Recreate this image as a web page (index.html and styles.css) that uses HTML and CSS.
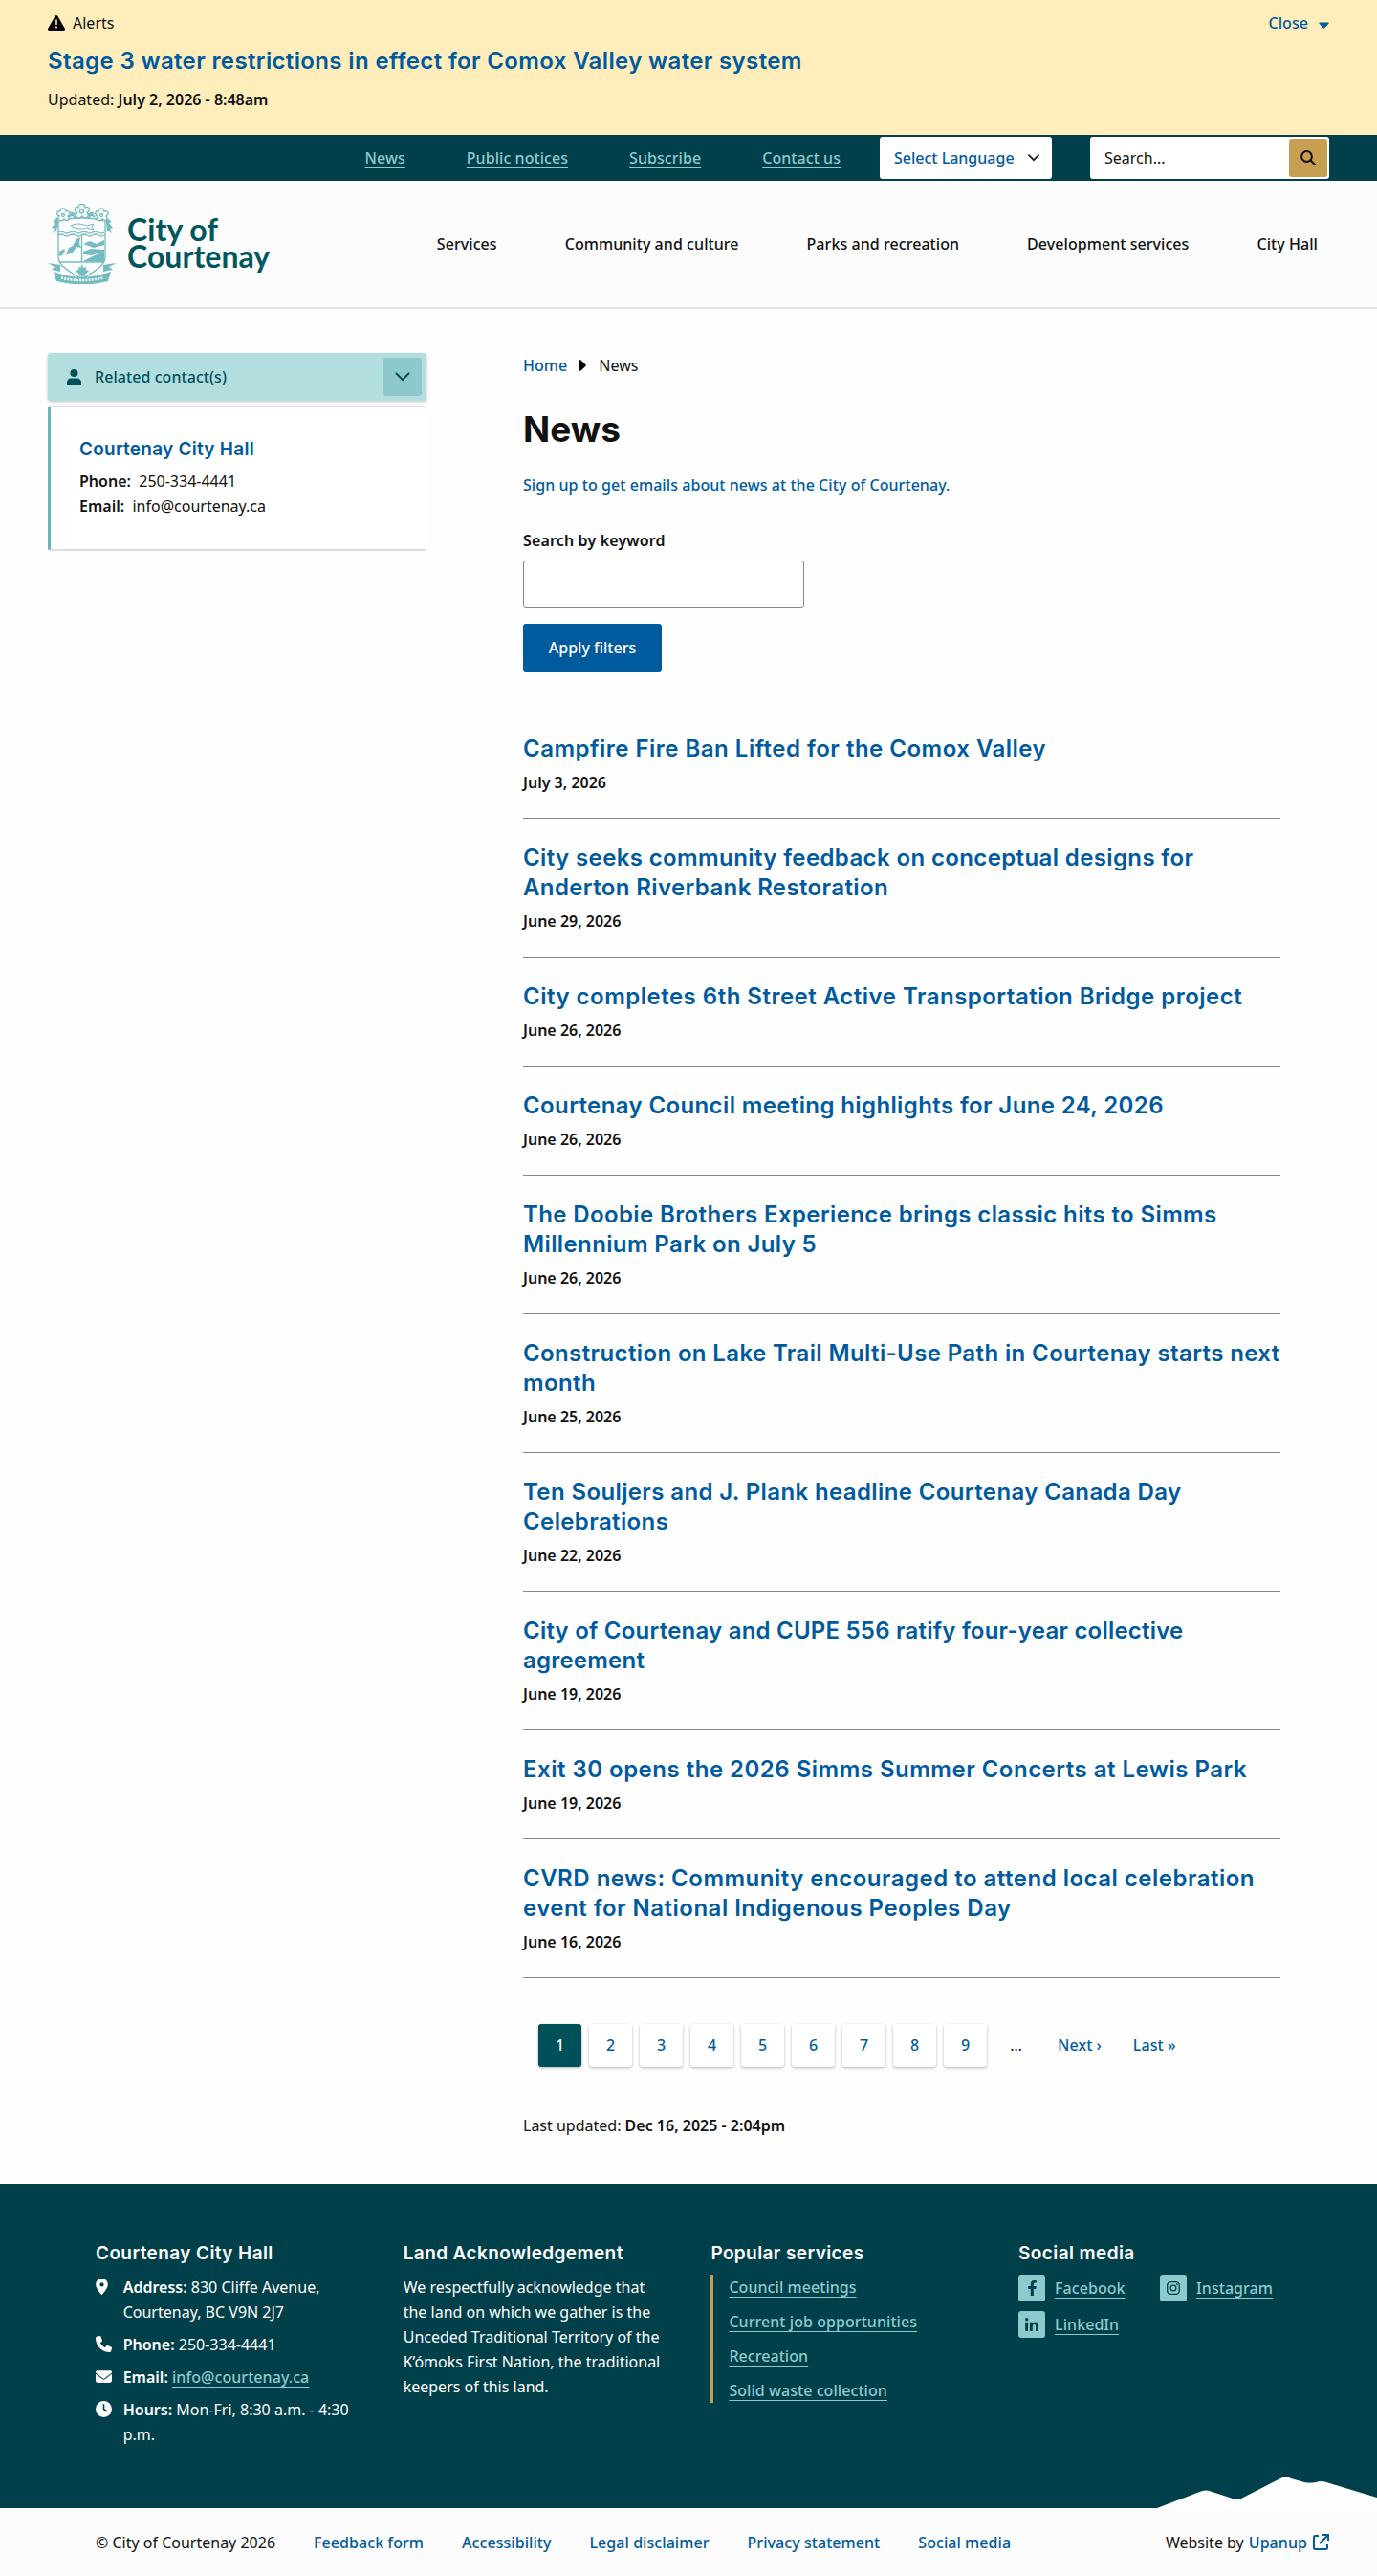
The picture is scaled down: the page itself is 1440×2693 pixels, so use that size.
FILE: index.html
```html
<!DOCTYPE html>
<html lang="en">
<head>
  <meta charset="UTF-8">
  <title>News | City of Courtenay</title>
  <link rel="stylesheet" href="styles.css">
</head>
<body>

<section class="alerts">
  <div class="alerts-top">
    <div class="alerts-label">
      <svg class="icon-warning" viewBox="0 0 18 16"><path d="M9 0c.6 0 1 .3 1.300.8l7.500 13c.6 1-.1 2.200-1.300 2.200h-15C.3 16-.4 14.800.2 13.800l7.500-13C8 .3 8.400 0 9 0z"/><path d="M9 5v4.500" stroke="#ffeebb" stroke-width="1.600" stroke-linecap="round"/><circle cx="9" cy="12.500" r="1.100" fill="#ffeebb"/></svg>
      Alerts
    </div>
    <a class="alerts-close" href="#">Close
      <svg width="11" height="7" viewBox="0 0 11 7"><path d="M1 .5h9c.7 0 1 .7.5 1.200L6.200 6.300a1 1 0 0 1-1.400 0L.5 1.700C0 1.200.3.500 1 .5z"/></svg>
    </a>
  </div>
  <h2 class="alerts-title"><a href="#">Stage 3 water restrictions in effect for Comox Valley water system</a></h2>
  <p class="alerts-date">Updated: <strong>July 2, 2026 - 8:48am</strong></p>
</section>

<div class="topbar">
  <nav class="topbar-links">
    <a href="#">News</a>
    <a href="#">Public notices</a>
    <a href="#">Subscribe</a>
    <a href="#">Contact us</a>
  </nav>
  <div class="language">
    Select Language
    <svg width="12" height="8" viewBox="0 0 12 8"><path d="M1 1.200l5 5 5-5" fill="none" stroke="#222" stroke-width="1.800" stroke-linecap="round"/></svg>
  </div>
  <form class="search">
    <span class="search-text">Search...</span>
    <button class="search-button" type="button">
      <svg width="16" height="16" viewBox="0 0 16 16"><circle cx="6.500" cy="6.500" r="5.400" fill="none" stroke="#111" stroke-width="2"/><path d="M10.500 10.500l4.500 4.500" stroke="#111" stroke-width="2" stroke-linecap="round"/></svg>
    </button>
  </form>
</div>

<header class="header">
  <a class="logo" href="#">
    <svg class="crest" viewBox="0 0 72 84" fill="none" stroke="#74bcc0" stroke-width="1.300">
      <!-- shield -->
      <path d="M11 18c14-4 35-4 49 0v38c0 9-12 15-24.500 23C23 71 11 65 11 56z" fill="#fcfcfc"/>
      <path d="M11 30q3-2 6 0t6 0 6 0 6 0 6 0 6 0 6 0 6 0M11 33q3-2 6 0t6 0 6 0 6 0 6 0 6 0 6 0 6 0"/>
      <path d="M35.500 33v28M12 61h47"/>
      <path d="M24 23q7-4 17 0l7-2-2 3 2 3-7-2q-9 3-17-2z" stroke-width="1"/>
      <g fill="#74bcc0" stroke="none">
        <path d="M12 50l5-3 1 2-3 5-3 1zM19 54l3-8 4-2 4-7 4-2-1 7 2 4-5-1-4 6-3 1z"/>
        <path d="M37 42l7-3 7 3 8-4v5l-11 3zM37 50l8-3 14 1v2L46 54l-9-1zM37 60l10-5 12-5v11z"/>
        <path d="M35.500 63l2 4 3-1-1 3 4 1-5 4 1 2-3-.5v3h-1v-3l-3 .5 1-2-5-4 4-1-1-3 3 1z"/>
        <path d="M0 62l13 2v7l-9-2 3-3zM72 62l-14 2v7l10-2-4-3z"/>
        <path d="M6 71q29 11 60 0l-3 10q-27 7-54 0z"/>
        <path d="M10 14l-5 5 3 1-4 5 3 1-2 5 4-3 2-8zM61 14l6 5-3 1 4 5-3 1 2 5-5-3-1-8z"/>
      </g>
      <!-- flowers -->
      <g fill="#fcfcfc">
        <path d="M31 9c-5-2-2-7 1-5 0-5 7-5 7 0 4-2 7 3 2 5 4 4-2 8-5 4-4 4-9 0-5-4z"/><circle cx="35.500" cy="8" r="2"/>
        <path d="M12 13c-4-2-2-6 1-5 0-4 6-4 6 0 4-1 6 3 2 5 3 4-1 6-4 3-4 4-8 0-5-3zM52 13c-4-2-2-6 1-5 0-4 6-4 6 0 4-1 6 3 2 5 3 4-1 6-4 3-4 4-8 0-5-3z"/>
        <circle cx="16" cy="12" r="1.500"/><circle cx="56" cy="12" r="1.500"/>
      </g>
      <path d="M22 14q4-5 7 2M49 14q-4-5-7 2M23 10q4-1 6 2M48 10q-4-1-6 2" stroke-width="2"/>
      <path d="M14 77.500q22 5 44 0" stroke="#fcfcfc" stroke-width="2.500" stroke-dasharray="2 1.200"/>
    </svg>
    <span class="logo-text">City of<br>Courtenay</span>
  </a>
  <nav class="main-nav">
    <a href="#">Services</a>
    <a href="#">Community and culture</a>
    <a href="#">Parks and recreation</a>
    <a href="#">Development services</a>
    <a href="#">City Hall</a>
  </nav>
</header>

<div class="page">
  <aside class="sidebar">
    <div class="contact-toggle">
      <svg width="15" height="17" viewBox="0 0 15 17"><circle cx="7.500" cy="4" r="4"/><path d="M0 17v-3c0-3 2-4.500 4-4.500h7c2 0 4 1.500 4 4.500v3z"/></svg>
      <span>Related contact(s)</span>
      <button class="toggle-button" type="button">
        <svg width="16" height="10" viewBox="0 0 16 10"><path d="M1.500 1.500L8 8l6.500-6.500" fill="none" stroke="#00505a" stroke-width="2" stroke-linecap="round"/></svg>
      </button>
    </div>
    <div class="contact-card">
      <h3><a href="#">Courtenay City Hall</a></h3>
      <p><strong>Phone:</strong>&nbsp; 250-334-4441</p>
      <p><strong>Email:</strong>&nbsp; info@courtenay.ca</p>
    </div>
  </aside>

  <main class="content">
    <div class="breadcrumb">
      <a href="#">Home</a>
      <svg width="7" height="12" viewBox="0 0 7 12"><path d="M0 1C0 .1.900-.2 1.500.4l5 4.900c.4.400.4 1 0 1.400l-5 4.900C.9 12.200 0 11.900 0 11z"/></svg>
      <span>News</span>
    </div>
    <h1>News</h1>
    <p class="signup"><a href="#">Sign up to get emails about news at the City of Courtenay.</a></p>

    <form class="filters">
      <label for="keyword">Search by keyword</label>
      <input id="keyword" type="text">
      <button class="apply" type="button">Apply filters</button>
    </form>

    <div class="news-list">
      <article><h2 class="loose"><a href="#">Campfire Fire Ban Lifted for the Comox Valley</a></h2><time>July 3, 2026</time></article>
      <article><h2><a href="#">City seeks community feedback on conceptual designs for<br>Anderton Riverbank Restoration</a></h2><time>June 29, 2026</time></article>
      <article><h2 class="loose"><a href="#">City completes 6th Street Active Transportation Bridge project</a></h2><time>June 26, 2026</time></article>
      <article><h2><a href="#">Courtenay Council meeting highlights for June 24, 2026</a></h2><time>June 26, 2026</time></article>
      <article><h2><a href="#">The Doobie Brothers Experience brings classic hits to Simms<br>Millennium Park on July 5</a></h2><time>June 26, 2026</time></article>
      <article><h2><a href="#">Construction on Lake Trail Multi-Use Path in Courtenay starts next<br>month</a></h2><time>June 25, 2026</time></article>
      <article><h2><a href="#">Ten Souljers and J. Plank headline Courtenay Canada Day<br>Celebrations</a></h2><time>June 22, 2026</time></article>
      <article><h2 class="tight"><a href="#">City of Courtenay and CUPE 556 ratify four-year collective<br>agreement</a></h2><time>June 19, 2026</time></article>
      <article><h2 class="loose"><a href="#">Exit 30 opens the 2026 Simms Summer Concerts at Lewis Park</a></h2><time>June 19, 2026</time></article>
      <article><h2 class="loose"><a href="#">CVRD news: Community encouraged to attend local celebration<br>event for National Indigenous Peoples Day</a></h2><time>June 16, 2026</time></article>
    </div>

    <nav class="pager">
      <a class="active" href="#">1</a>
      <a href="#">2</a>
      <a href="#">3</a>
      <a href="#">4</a>
      <a href="#">5</a>
      <a href="#">6</a>
      <a href="#">7</a>
      <a href="#">8</a>
      <a href="#">9</a>
      <span class="dots">…</span>
      <a class="plain next" href="#">Next ›</a>
      <a class="plain" href="#">Last »</a>
    </nav>

    <p class="updated">Last updated: <strong>Dec 16, 2025 - 2:04pm</strong></p>
  </main>
</div>

<footer class="footer">
  <div class="footer-col">
    <h3>Courtenay City Hall</h3>
    <ul class="contact-list">
      <li>
        <svg width="13" height="17" viewBox="0 0 12 16"><path fill-rule="evenodd" d="M6 0a6 6 0 0 1 6 6c0 2.700-3.700 7.500-5.300 9.600a.9.900 0 0 1-1.400 0C3.700 13.500 0 8.700 0 6a6 6 0 0 1 6-6zm0 4a2 2 0 1 0 0 4 2 2 0 0 0 0-4z"/></svg>
        <p><strong>Address:</strong> 830 Cliffe Avenue, Courtenay, BC V9N 2J7</p>
      </li>
      <li>
        <svg width="17" height="17" viewBox="0 0 16 16"><path d="M5.200.8a1.300 1.300 0 0 0-1.500-.8L1 .8C.4 1 0 1.500 0 2c0 7.700 6.300 14 14 14 .6 0 1-.4 1.200-1l.8-2.700a1.300 1.300 0 0 0-.8-1.500L12 9.400a1.300 1.300 0 0 0-1.500.4L9.200 11.500A10.600 10.600 0 0 1 4.500 6.800l1.700-1.300c.4-.4.6-1 .3-1.500z"/></svg>
        <p><strong>Phone:</strong> 250-334-4441</p>
      </li>
      <li>
        <svg class="icon-mail" width="17" height="13" viewBox="0 0 16 12"><path d="M1.500 0h13a1.500 1.500 0 0 1 .9 2.700l-6.800 5.100a1 1 0 0 1-1.200 0L.6 2.700A1.500 1.500 0 0 1 1.500 0zM0 3.500l6.800 5.100c.7.500 1.700.5 2.400 0L16 3.500V10a2 2 0 0 1-2 2H2a2 2 0 0 1-2-2z"/></svg>
        <p><strong>Email:</strong> <a href="#">info@courtenay.ca</a></p>
      </li>
      <li>
        <svg width="17" height="17" viewBox="0 0 16 16"><circle cx="8" cy="8" r="8"/><path d="M8 3.500V8l3 2" fill="none" stroke="#00404a" stroke-width="1.500" stroke-linecap="round"/></svg>
        <p><strong>Hours:</strong> Mon-Fri, 8:30 a.m. - 4:30 p.m.</p>
      </li>
    </ul>
  </div>
  <div class="footer-col land">
    <h3>Land Acknowledgement</h3>
    <p>We respectfully acknowledge that the land on which we gather is the Unceded Traditional Territory of the K’ómoks First Nation, the traditional keepers of this land.</p>
  </div>
  <div class="footer-col">
    <h3>Popular services</h3>
    <ul class="services">
      <li><a href="#">Council meetings</a></li>
      <li><a href="#">Current job opportunities</a></li>
      <li><a href="#">Recreation</a></li>
      <li><a href="#">Solid waste collection</a></li>
    </ul>
  </div>
  <div class="footer-col">
    <h3>Social media</h3>
    <ul class="social">
      <li>
        <span class="social-icon"><svg width="10" height="16" viewBox="0 0 10 16"><path d="M9.300 9l.4-2.900H6.900V4.200c0-.8.4-1.600 1.600-1.600h1.300V.2S8.700 0 7.600 0C5.300 0 3.800 1.400 3.800 3.900v2.200H1.200V9h2.600v7h3.100V9z"/></svg></span>
        <a href="#">Facebook</a>
      </li>
      <li>
        <span class="social-icon"><svg width="14" height="14" viewBox="0 0 14 14" fill="none" stroke="#00404a" stroke-width="1.300"><rect x=".7" y=".7" width="12.600" height="12.600" rx="3.600"/><circle cx="7" cy="7" r="2.900"/><circle cx="10.700" cy="3.300" r=".3"/></svg></span>
        <a href="#">Instagram</a>
      </li>
      <li>
        <span class="social-icon"><svg width="14" height="14" viewBox="0 0 14 14"><circle cx="1.700" cy="1.700" r="1.700"/><path d="M.2 4.700h2.900V14H.2zM4.900 4.700h2.800v1.200c.5-.8 1.400-1.500 2.800-1.500C13.400 4.400 14 6.300 14 8.800V14h-2.900V9.400c0-1.100 0-2.500-1.500-2.500S7.800 8.100 7.800 9.400V14H4.900z"/></svg></span>
        <a href="#">LinkedIn</a>
      </li>
    </ul>
  </div>
  <svg class="mountains" viewBox="0 0 230 32"><path d="M0 32L46 14.500q5-2 10 0l23 7.500q5 2 9 0L129 1q6-3 11 0l14 4q6 1 12 0 6-2 11 0l53 16v11z" fill="#fefefe"/></svg>
</footer>

<div class="bottom">
  <span>© City of Courtenay 2026</span>
  <nav class="bottom-links">
    <a href="#">Feedback form</a>
    <a href="#">Accessibility</a>
    <a href="#">Legal disclaimer</a>
    <a href="#">Privacy statement</a>
    <a href="#">Social media</a>
  </nav>
  <span class="credit">Website by <a href="#">Upanup</a>
    <svg width="17" height="17" viewBox="0 0 17 17" fill="none" stroke="#005a9e" stroke-width="2"><path d="M6 2H2.500A1.500 1.500 0 0 0 1 3.500v11A1.500 1.500 0 0 0 2.500 16h11a1.500 1.500 0 0 0 1.500-1.500V11M10 1h6v6M16 1L7 10"/></svg>
  </span>
</div>

</body>
</html>
```
FILE: styles.css
```css
* { box-sizing: border-box; }
body { margin: 0; background: #fefefe; color: #111; font-family: "Noto Sans", sans-serif; font-size: 16px; line-height: 26px; }
h1, h2, h3, p, ul { margin: 0; padding: 0; }
h1, h2, h3 { font-family: Inter, sans-serif; font-weight: 600; }
ul { list-style: none; }
a { color: #005a9e; text-decoration: none; font-weight: 500; letter-spacing: .06px; }
h2 a, h3 a { font-weight: 600; letter-spacing: inherit; }
strong { font-weight: 600; }
svg { flex: none; }
button { border: none; padding: 0; font: inherit; }

/* alerts */
.alerts { height: 141px; background: #ffeebb; padding: 11px 50px 0; }
.alerts-top { display: flex; justify-content: space-between; }
.alerts-label { display: flex; align-items: center; gap: 8px; }
.icon-warning { width: 18px; height: 16px; }
.alerts-close { display: flex; align-items: center; gap: 11px; }
.alerts-close svg { fill: #005a9e; margin-top: 4px; }
.alerts-title { font-size: 24px; line-height: 30px; margin-top: 12px; letter-spacing: .36px; }
.alerts-date { margin-top: 12px; }

/* top bar */
.topbar { height: 48px; background: #00404a; display: flex; align-items: center; justify-content: flex-end; padding-right: 50px; }
.topbar-links { display: flex; gap: 64px; margin-right: 41px; }
.topbar-links a, .footer a { color: #8dcacd; text-decoration: underline; text-decoration-thickness: 1px; text-underline-offset: 4px; }
.language { width: 180px; height: 44px; background: #fff; border-radius: 3px; color: #005a9e; font-weight: 500; display: flex; align-items: center; justify-content: space-between; padding: 0 13px 0 15px; margin-right: 40px; }
.search { width: 250px; height: 44px; background: #fff; border-radius: 3px; display: flex; align-items: center; justify-content: space-between; padding: 0 2px 0 15px; }
.search-button { width: 40px; height: 40px; background: #c89f51; border-radius: 3px; display: flex; align-items: center; justify-content: center; }

/* header */
.header { height: 134px; background: #fcfcfc; border-bottom: 2px solid #e2e2e2; display: flex; justify-content: space-between; padding: 0 62px 0 50px; }
.logo { display: flex; padding-top: 24px; gap: 11px; }
.crest { width: 72px; height: 84px; }
.logo-text { font-family: Lato, sans-serif; font-weight: 700; font-size: 32px; line-height: 27.500px; color: #00565c; padding-top: 13px; }
.main-nav { display: flex; gap: 71px; padding-top: 53px; }
.main-nav a { color: #111; }

/* page */
.page { display: flex; padding: 46px 101px 0 50px; height: 1960px; }
.sidebar { width: 396px; margin-right: 101px; }
.contact-toggle { height: 50px; background: #b2dee0; border-radius: 3px; box-shadow: 0 1px 3px rgba(0,0,0,.25); color: #00505a; fill: #00505a; font-weight: 500; letter-spacing: .06px; display: flex; align-items: center; padding: 0 5px 0 20px; gap: 14px; }
.toggle-button { width: 40px; height: 40px; background: #8dc8cc; border-radius: 3px; margin-left: auto; display: flex; align-items: center; justify-content: center; }
.contact-card { height: 152px; margin-top: 5px; border: 1px solid #ddd; border-left: 3px solid #6ab4b8; border-bottom: 2px solid #ddd; border-radius: 3px; background: #fff; padding: 31px 30px 0; }
.contact-card h3 { font-size: 19px; line-height: 28px; margin-bottom: 6px; letter-spacing: .25px; }

.content { width: 792px; }
.breadcrumb { display: flex; align-items: center; gap: 13px; }
h1 { font-size: 37px; line-height: 44px; margin-top: 32px; font-weight: 700; }
.signup { margin-top: 23px; }
.signup a { text-decoration: underline; text-decoration-thickness: 1px; text-underline-offset: 4px; }
.filters { display: flex; flex-direction: column; align-items: flex-start; margin-top: 32px; }
.filters label { font-weight: 600; letter-spacing: .15px; }
.filters input { width: 294px; height: 50px; border: 1px solid #888; border-radius: 3px; background: #fff; margin: 8px 0 16px; }
.apply { width: 145px; height: 50px; border-radius: 3px; background: #005a9e; color: #fff; font-weight: 500; }

.news-list { margin-top: 40px; }
.news-list article { border-bottom: 1px solid #888; padding: 25px 0 24px; }
.news-list h2 { font-size: 24px; line-height: 31px; letter-spacing: .38px; margin-bottom: 7px; white-space: nowrap; }
.news-list .loose { letter-spacing: .49px; }
.news-list .tight { letter-spacing: .22px; }
.news-list time { display: block; font-weight: 600; }

.pager { display: flex; gap: 8px; margin: 48px 0 0 16px; line-height: 44px; text-align: center; }
.pager a { width: 45px; height: 45px; border-radius: 3px; box-shadow: 0 1px 3px rgba(0,0,0,.3); background: #fff; }
.pager .active { background: #00505a; color: #fff; }
.pager .dots { width: 45px; }
.pager .plain { width: auto; background: none; box-shadow: none; padding: 0 14px 0 13px; }
.pager .next { padding-right: 12px; }
.updated { margin-top: 48px; }

/* footer */
.footer { position: relative; height: 339px; background: #00404a; color: #fff; fill: #fff; display: flex; padding: 59px 0 0 100px; }
.footer-col { width: 321.700px; }
.footer h3 { font-size: 19px; line-height: 28px; margin-bottom: 8px; letter-spacing: .4px; }
.contact-list li { display: flex; margin-bottom: 8px; }
.contact-list svg { margin: 4px 0 0; }
.contact-list .icon-mail { margin-top: 6px; }
.contact-list p { width: 245px; margin-left: auto; margin-right: 48px; }
.land p { width: 276px; }
.services { border-left: 3px solid #c89f51; padding-left: 16px; height: 134px; }
.services li { margin-bottom: 10px; }
.social { display: grid; grid-template-columns: 148px 148px; row-gap: 10px; }
.social li { display: flex; align-items: center; gap: 10px; }
.social-icon { width: 28px; height: 28px; background: #8dcacd; border-radius: 3px; fill: #00404a; display: flex; align-items: center; justify-content: center; }
/* sits over the bottom right corner of the footer */
.mountains { position: absolute; right: 0; bottom: 0; width: 230px; height: 32px; }

.bottom { height: 71px; background: #fcfcfc; display: flex; align-items: center; padding: 0 50px 0 100px; }
.bottom-links { display: flex; gap: 40px; margin-left: 40px; }
.credit { margin-left: auto; display: flex; align-items: center; }
.credit a { margin: 0 6px 0 5px; }
```
